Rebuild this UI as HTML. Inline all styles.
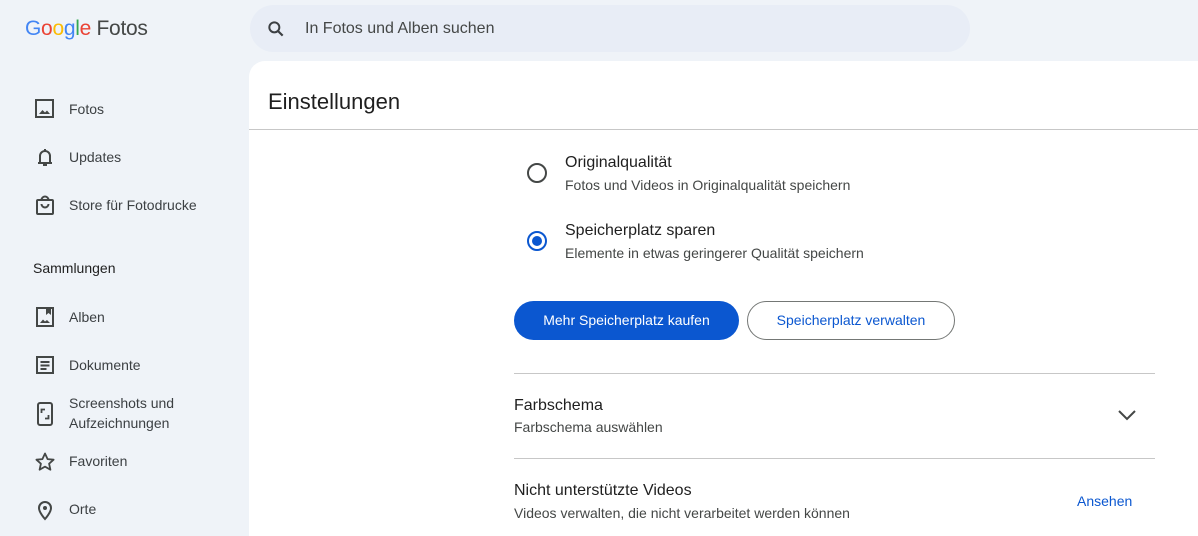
<!DOCTYPE html>
<html><head><meta charset="utf-8"><style>
*{margin:0;padding:0;box-sizing:border-box}
body{width:1198px;height:536px;overflow:hidden;background:#eff3f8;font-family:"Liberation Sans",sans-serif;position:relative;color:#1f1f1f}
.a{position:absolute;white-space:nowrap}
.nav{position:absolute;left:34px;font-size:14px;color:#3c4043;white-space:nowrap}
.nav svg{position:absolute;left:0;top:0}
.nav span{position:absolute;left:35px;white-space:nowrap}
.t{font-size:16px;color:#1f1f1f}
.s{font-size:14px;color:#444746}
</style></head><body>
<div class="a" style="left:25px;top:17px;font-size:21px;letter-spacing:-0.3px"><span style="color:#4285f4">G</span><span style="color:#ea4335">o</span><span style="color:#fbbc05">o</span><span style="color:#4285f4">g</span><span style="color:#34a853">l</span><span style="color:#ea4335">e</span> <span style="color:#444746">Fotos</span></div>
<div class="a" style="left:250px;top:5px;width:720px;height:47px;border-radius:24px;background:#e8edf6"></div>
<svg class="a" style="left:266px;top:19px" width="20" height="20" viewBox="0 0 24 24"><circle cx="10" cy="10" r="6" fill="none" stroke="#3c4043" stroke-width="2.4"/><path d="M14.5 14.5L20 20" stroke="#3c4043" stroke-width="2.6"/></svg>
<div class="a" style="left:305px;top:20px;font-size:16px;color:#444746">In Fotos und Alben suchen</div>

<div class="nav" style="top:98px;height:22px"><svg width="22" height="22" viewBox="0 0 22 22"><rect x="2" y="2" width="17" height="17" fill="none" stroke="#444746" stroke-width="2"/><path d="M5 16l3.5-4 2.5 2.5 2-2 3 3.5z" fill="#444746"/></svg><span style="top:3px">Fotos</span></div>
<div class="nav" style="top:146px;height:22px"><svg width="22" height="22" viewBox="0 0 22 22"><path d="M4 17h14M6 17V10a5 5 0 0 1 10 0v7M11 3v2M9 19h4" fill="none" stroke="#444746" stroke-width="2"/></svg><span style="top:3px">Updates</span></div>
<div class="nav" style="top:194px;height:22px"><svg width="22" height="22" viewBox="0 0 22 22"><rect x="3" y="6" width="16" height="14" rx="1" fill="none" stroke="#444746" stroke-width="2"/><path d="M7.5 6a3.5 3.5 0 0 1 7 0M7.5 10a3.5 3.5 0 0 0 7 0" fill="none" stroke="#444746" stroke-width="2"/></svg><span style="top:3px">Store für Fotodrucke</span></div>
<div class="a" style="left:33px;top:260px;font-size:14px;color:#1f1f1f">Sammlungen</div>
<div class="nav" style="top:306px;height:22px"><svg width="22" height="22" viewBox="0 0 22 22"><rect x="3" y="2" width="16" height="18" fill="none" stroke="#444746" stroke-width="2"/><path d="M12 2h5v7l-2.5-2-2.5 2z M6 17l3-3.5 2 2 2-1.5 3 3z" fill="#444746"/></svg><span style="top:3px">Alben</span></div>
<div class="nav" style="top:354px;height:22px"><svg width="22" height="22" viewBox="0 0 22 22"><rect x="3" y="3" width="16" height="16" fill="none" stroke="#444746" stroke-width="2"/><path d="M6.5 8h9M6.5 11.5h9M6.5 15h6" stroke="#444746" stroke-width="2"/></svg><span style="top:3px">Dokumente</span></div>
<div class="nav" style="top:401px;height:26px"><svg width="22" height="26" viewBox="0 0 22 26"><rect x="4" y="2" width="14" height="22" rx="2" fill="none" stroke="#444746" stroke-width="2"/><path d="M7.5 12V8.5H11M14.5 14v3.5H11" fill="none" stroke="#444746" stroke-width="1.8"/></svg><span style="top:-8px;line-height:20px">Screenshots und<br>Aufzeichnungen</span></div>
<div class="nav" style="top:451px;height:22px"><svg width="22" height="22" viewBox="0 0 22 22"><path d="M11 2.5l2.6 5.6 6 .6-4.5 4 1.3 6L11 15.6 5.6 18.7l1.3-6-4.5-4 6-.6z" fill="none" stroke="#444746" stroke-width="1.8" stroke-linejoin="round"/></svg><span style="top:2px">Favoriten</span></div>
<div class="nav" style="top:499px;height:22px"><svg width="22" height="22" viewBox="0 0 22 22"><path d="M11 20s-6-6.5-6-11a6 6 0 0 1 12 0c0 4.5-6 11-6 11z" fill="none" stroke="#444746" stroke-width="2"/><circle cx="11" cy="9" r="2" fill="#444746"/></svg><span style="top:2px">Orte</span></div>

<div class="a" style="left:249px;top:61px;width:949px;height:475px;background:#fff;border-top-left-radius:16px"></div>
<div class="a" style="left:268px;top:89px;font-size:22px;color:#1f1f1f">Einstellungen</div>
<div class="a" style="left:249px;top:129px;width:949px;height:1px;background:#c7c7c7"></div>

<div class="a" style="left:527px;top:163px;width:20px;height:20px;border-radius:50%;border:2px solid #444746"></div>
<div class="a t" style="left:565px;top:154px">Originalqualität</div>
<div class="a s" style="left:565px;top:177px">Fotos und Videos in Originalqualität speichern</div>
<div class="a" style="left:527px;top:231px;width:20px;height:20px;border-radius:50%;border:2px solid #0b57d0"><div style="position:absolute;left:3px;top:3px;width:10px;height:10px;border-radius:50%;background:#0b57d0"></div></div>
<div class="a t" style="left:565px;top:222px">Speicherplatz sparen</div>
<div class="a s" style="left:565px;top:245px">Elemente in etwas geringerer Qualität speichern</div>

<div class="a" style="left:514px;top:301px;width:225px;height:39px;border-radius:20px;background:#0b57d0;color:#fff;font-size:14px;text-align:center;line-height:39px">Mehr Speicherplatz kaufen</div>
<div class="a" style="left:747px;top:301px;width:208px;height:39px;border-radius:20px;border:1px solid #747775;color:#0b57d0;font-size:14px;text-align:center;line-height:37px">Speicherplatz verwalten</div>

<div class="a" style="left:514px;top:373px;width:641px;height:1px;background:#c7c7c7"></div>
<div class="a t" style="left:514px;top:397px">Farbschema</div>
<div class="a s" style="left:514px;top:419px">Farbschema auswählen</div>
<svg class="a" style="left:1117px;top:408px" width="20" height="14" viewBox="0 0 20 14"><path d="M2 3l8 8 8-8" fill="none" stroke="#444746" stroke-width="2"/></svg>
<div class="a" style="left:514px;top:458px;width:641px;height:1px;background:#c7c7c7"></div>
<div class="a t" style="left:514px;top:482px">Nicht unterstützte Videos</div>
<div class="a s" style="left:514px;top:505px">Videos verwalten, die nicht verarbeitet werden können</div>
<div class="a" style="left:1077px;top:493px;font-size:14px;color:#0b57d0">Ansehen</div>
</body></html>
